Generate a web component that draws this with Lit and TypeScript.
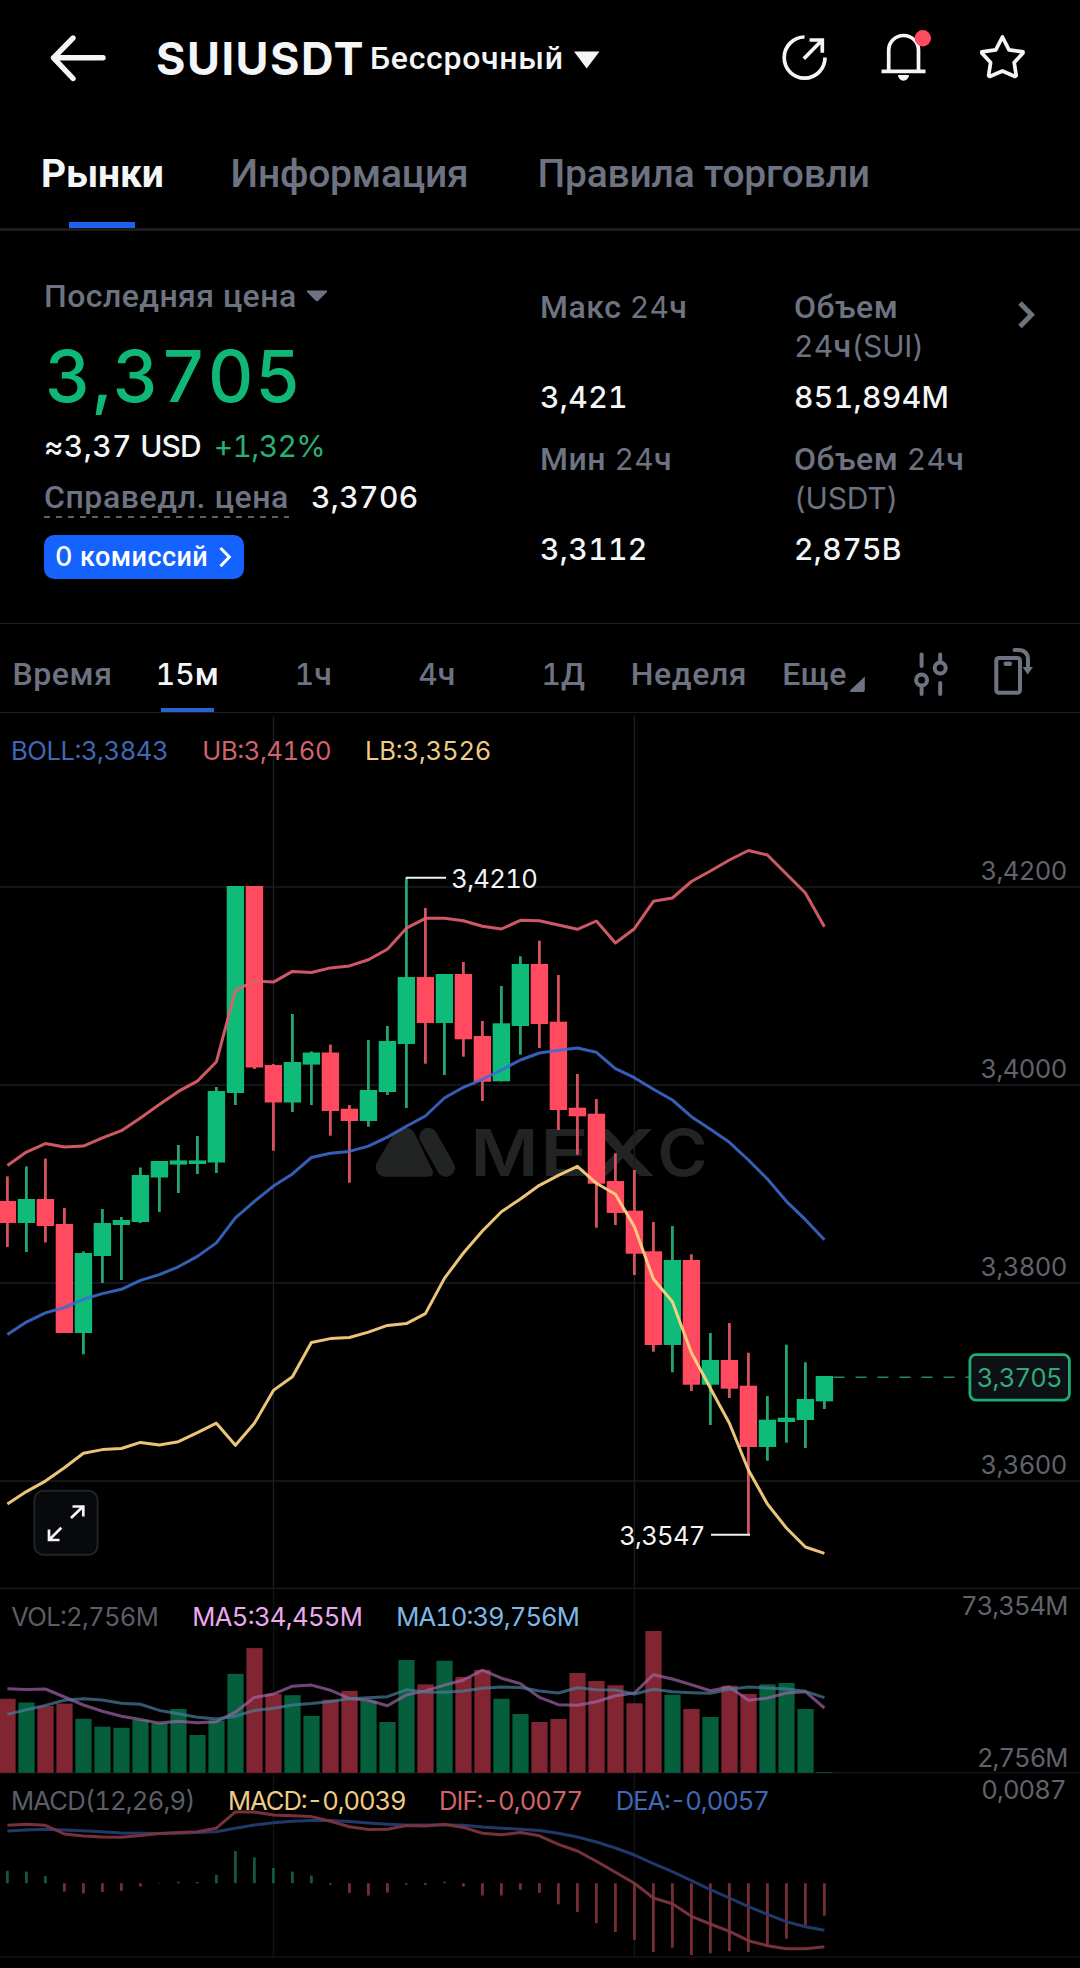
import { LitElement, html, svg, css } from "lit";
import { customElement } from "lit/decorators.js";

type Candle = [up: 0 | 1, high: number, top: number, bottom: number, low: number];

const STEP = 19;
const cx = (i: number) => 7.4 + STEP * i;

const candles: Candle[] = [
  [0, 1176.4, 1201, 1223, 1247], [1, 1166.4, 1199, 1223, 1252], [0, 1158.6, 1199, 1226, 1242.5],
  [0, 1208, 1224, 1333, 1333], [1, 1251.4, 1253, 1333, 1354.3], [1, 1209, 1223, 1256, 1283],
  [1, 1217, 1220, 1225, 1280], [1, 1167.5, 1175, 1222, 1223], [1, 1161, 1161, 1177.5, 1212],
  [1, 1145, 1160.4, 1164.6, 1193], [1, 1136, 1160.4, 1164, 1174], [1, 1087, 1091, 1162.5, 1173],
  [1, 886, 886, 1093, 1105], [0, 886, 886, 1067.5, 1069], [0, 1064, 1065, 1102.5, 1150.7],
  [1, 1014, 1062, 1102.5, 1112], [1, 1051.4, 1052.5, 1064.6, 1105], [0, 1044.6, 1052.5, 1111, 1135.7],
  [0, 1105, 1108.7, 1121, 1182.7], [1, 1040, 1090, 1121, 1126.7], [1, 1026, 1041, 1092, 1095],
  [1, 877.3, 977, 1044, 1108], [0, 908, 977, 1023, 1063.7], [1, 974, 974, 1023, 1075],
  [0, 962, 974, 1039.3, 1056.7], [0, 1021, 1036, 1081.7, 1101], [1, 986, 1023.3, 1081.3, 1081.3],
  [1, 956.3, 964, 1026, 1054.7], [0, 940.7, 964, 1024, 1048], [0, 975, 1021.7, 1110, 1130],
  [0, 1074, 1107.7, 1116.3, 1154.7], [0, 1099, 1113.7, 1183.7, 1227.7], [0, 1153.3, 1181, 1213, 1225],
  [0, 1170, 1210.7, 1253.7, 1275], [0, 1222, 1251.3, 1345, 1351.7], [1, 1226, 1260, 1345, 1372.3],
  [0, 1254.3, 1260, 1384.7, 1391], [1, 1333, 1360, 1384.7, 1425], [0, 1323, 1360, 1388.7, 1398],
  [0, 1352.7, 1385.7, 1447, 1534.7], [1, 1396, 1419.7, 1447, 1460.7], [1, 1344.7, 1417.7, 1422, 1442.7],
  [1, 1362.3, 1399, 1420, 1448], [1, 1376, 1376, 1401.3, 1409],
];

const upperBand = [
  1165.4, 1152.1, 1143.6, 1147.1, 1146.1, 1137.9, 1130.7, 1117.9, 1104.6, 1091.4, 1081.1, 1061.8, 990.4, 981.1, 982.1,
  971.4, 972.5, 967.9, 965.9, 959.8, 949.3, 928.2, 918.3, 918.3, 920.7, 926.3, 929, 920.3, 920.7, 925, 929.3, 921, 943,
  928.7, 901.3, 898, 881.5, 871, 860, 850.5, 855, 874, 893, 926.8,
];
const middleBand = [
  1334.6, 1322.1, 1312.9, 1307.5, 1299.3, 1293.6, 1289.3, 1280.4, 1274.6, 1266.8, 1256.4, 1242.9, 1217.9, 1201.4, 1186.1,
  1173.9, 1157.5, 1153.2, 1151.4, 1146.1, 1137.1, 1126.2, 1116, 1098, 1087.3, 1079.3, 1070, 1060, 1053, 1050.3, 1048,
  1052.3, 1068.7, 1077.7, 1089.3, 1100, 1116.7, 1129.3, 1142.3, 1160, 1179, 1201.3, 1219.7, 1239.7,
];
const lowerBand = [
  1504, 1491.6, 1481.1, 1467.7, 1453.2, 1449.6, 1448.5, 1442.4, 1444.9, 1441.7, 1432.6, 1423.2, 1445.3, 1423.2, 1390.4,
  1376.8, 1342.5, 1338.6, 1337.5, 1332.1, 1325.4, 1323.6, 1313.6, 1278.4, 1253, 1231, 1211.7, 1199, 1185.3, 1175.3,
  1166.3, 1183.3, 1194.3, 1226.7, 1279, 1301.7, 1352.7, 1388.3, 1423.3, 1470, 1504, 1528, 1547, 1553.3,
];

const volumeTops = [
  1698.8, 1702.5, 1706, 1703.6, 1718.8, 1726.7, 1727.8, 1719.9, 1723.1, 1709, 1735, 1720.6, 1673.9, 1648.1, 1694,
  1695.2, 1715.9, 1699.6, 1690.9, 1700.7, 1722, 1660, 1684.4, 1660.8, 1677, 1669.9, 1698.8, 1714, 1722, 1719, 1673,
  1681, 1685.3, 1703.3, 1631, 1694.7, 1709, 1717, 1685.7, 1694, 1684.3, 1683, 1709, 1772,
];
const volumeMa5 = [
  1688.7, 1689.4, 1689, 1697, 1705, 1711.2, 1716.2, 1719.5, 1723.1, 1721.3, 1722.8, 1721.7, 1712.2, 1697.4, 1694.1,
  1686.2, 1685.1, 1690.2, 1698.5, 1700.3, 1705.7, 1694.9, 1690.9, 1685.1, 1680, 1670.2, 1678.2, 1683.6, 1697.3, 1704.7,
  1705.3, 1701.7, 1695.7, 1693, 1674.7, 1679, 1684.7, 1690.7, 1687, 1700.3, 1698, 1693, 1691.7, 1708,
];
const volumeMa10 = [
  1714.4, 1709.7, 1705.4, 1700.3, 1698.8, 1699.9, 1703.2, 1704.3, 1710.4, 1713.7, 1717.3, 1719.1, 1716.2, 1710.4,
  1708.3, 1705, 1703.6, 1701.4, 1698.8, 1697.8, 1696.7, 1689.8, 1692, 1692.3, 1690.9, 1688.3, 1686.9, 1687.6, 1691,
  1693, 1687.7, 1689.7, 1690, 1694, 1689.3, 1691.7, 1692.7, 1693.3, 1689.3, 1687, 1688, 1689, 1691.3, 1697.7,
];

const MACD_ZERO = 1883.3;
const macdEnds = [
  1870.9, 1871.6, 1876, 1891.6, 1893.4, 1891.9, 1890.8, 1886.5, 1882.8, 1881.8, 1882.1, 1874.9, 1851, 1857.5, 1868,
  1871.6, 1875.6, 1884.9, 1893, 1895.5, 1892.6, 1884.7, 1885, 1881.8, 1886.5, 1895.5, 1895.5, 1889.7, 1892.7, 1904.3,
  1912, 1923.3, 1932, 1940, 1952, 1947.7, 1955, 1953.3, 1951.3, 1952, 1945.3, 1938.7, 1925.3, 1915.7,
];
const dif = [
  1825.3, 1824.2, 1825.3, 1834, 1836.1, 1836.9, 1837.2, 1835.4, 1833.6, 1832.5, 1831.8, 1828.2, 1811.9, 1811.9, 1815.1,
  1815.8, 1816.6, 1821.3, 1826.7, 1829.6, 1829.2, 1825.6, 1826, 1824.2, 1827.4, 1833.2, 1834.7, 1832.5, 1835.8, 1844.3,
  1851, 1861.3, 1872.3, 1883.3, 1898, 1903.7, 1916.3, 1924, 1931.3, 1940.7, 1945.7, 1948.7, 1948.7, 1946.7,
];
const dea = [
  1831.1, 1830, 1829.3, 1830, 1830.7, 1831.8, 1832.9, 1833.2, 1833.6, 1833.2, 1832.5, 1831.8, 1828.2, 1824.9, 1822.7,
  1821.3, 1820.6, 1820.6, 1821.6, 1823.1, 1824.2, 1824.9, 1824.9, 1824.9, 1825.3, 1827.1, 1828.2, 1829.2, 1830.5,
  1833.3, 1837, 1842, 1848, 1855, 1863.7, 1871.7, 1880.7, 1889.7, 1898, 1906.7, 1914.3, 1921.7, 1926.7, 1930.3,
];

const points = (ys: number[]) => ys.map((y, i) => `${cx(i)},${y}`).join(" ");

/** Digits and Latin letters use Inter, Cyrillic stays in Roboto. */
const mixed = (text: string) =>
  text
    .split(/([0-9]+|[A-Z()]+)/)
    .filter((part) => part)
    .map((part) =>
      /[0-9]/.test(part)
        ? html`<span class="n">${part}</span>`
        : /[A-Z()]/.test(part)
          ? html`<span class="n latin">${part}</span>`
          : part,
    );

/** [text, x, baseline, width, class] */
type Label = [string, number, number, number, string];

const labels: Label[] = [
  ["BOLL:3,3843", 11, 759.7, 157.6, "t-blue"],
  ["UB:3,4160", 202.3, 759.7, 129.2, "t-red"],
  ["LB:3,3526", 365, 759.7, 126.4, "t-yellow"],
  ["VOL:2,756M", 11.3, 1626, 147.5, "t-gray"],
  ["MA5:34,455M", 192.3, 1626, 170.6, "t-pink"],
  ["MA10:39,756M", 396.2, 1626, 183.7, "t-sky"],
  ["MACD(12,26,9)", 11, 1809.7, 184.4, "t-gray"],
  ["MACD:-0,0039", 228, 1809.7, 178.7, "t-yellow"],
  ["DIF:-0,0077", 439, 1809.7, 144.2, "t-red"],
  ["DEA:-0,0057", 615.8, 1809.7, 154, "t-blue"],
  ["3,4200", 980.4, 880, 87, "t-axis"],
  ["3,4000", 980.4, 1078, 87, "t-axis"],
  ["3,3800", 980.4, 1276, 87, "t-axis"],
  ["3,3600", 980.4, 1474, 87, "t-axis"],
  ["73,354M", 961, 1614.7, 107.4, "t-axis"],
  ["2,756M", 977, 1766.7, 91.4, "t-axis"],
  ["0,0087", 981.2, 1798.7, 85.4, "t-axis"],
  ["3,4210", 451.2, 887.7, 86.6, "t-white"],
  ["3,3547", 619.2, 1544.7, 86.2, "t-white"],
];

/** Watermark letters: [letter, x, width] */
const wordmark: [string, number, number][] = [
  ["M", 470.5, 68],
  ["E", 540, 49],
  ["X", 590, 66],
  ["C", 657.5, 50],
];

@customElement("kline-chart")
export class KlineChart extends LitElement {
  static styles = css`
    :host { display: block; }
    svg { display: block; width: 1080px; height: 1254px; }
    text { font-family: Inter, "Liberation Sans", sans-serif; font-size: 25.6px; font-weight: 400; font-variant-numeric: tabular-nums; }
    .grid { stroke: #1b1d22; stroke-width: 1.4; }
    .grid.faint { stroke: #121316; }
    .body-up { fill: #0ebb78; }
    .body-down { fill: #ff4a60; }
    .wick-up { fill: #24a56f; }
    .wick-down { fill: #d8515f; }
    .vol-up { fill: #065f3c; }
    .vol-down { fill: #822532; }
    .macd-up { fill: #14573c; }
    .macd-down { fill: #762d34; }
    .line { fill: none; stroke-width: 3; stroke-linejoin: round; }
    .ub { stroke: #e0606c; stroke-opacity: 0.92; }
    .mb { stroke: #3c6cd0; stroke-opacity: 0.88; }
    .lb { stroke: #ffd583; stroke-opacity: 0.92; }
    .ma5 { stroke: #a065a5; stroke-opacity: 0.7; }
    .ma10 { stroke: #487d9b; stroke-opacity: 0.7; }
    .dif { stroke: #7c353d; stroke-opacity: 0.95; }
    .dea { stroke: #233b70; stroke-opacity: 0.95; }
    .t-blue { fill: #4168b8; }
    .t-red { fill: #d0636c; }
    .t-yellow { fill: #eecb86; }
    .t-gray { fill: #5b5e66; }
    .t-axis { fill: #60636b; }
    .t-pink { fill: #eda9ee; }
    .t-sky { fill: #7cb9e8; }
    .t-white { fill: #f5f5f7; }
    .t-price { fill: #31ab77; }
    .mark { fill: #222423; }
    .mark-text { font-size: 64.5px; font-weight: 600; fill: #222423; }
    .callout { stroke: #f0f0f2; stroke-width: 2; }
    .dash { stroke: #27885d; stroke-width: 1.4; stroke-dasharray: 11 11; }
    .tag { fill: #0d1015; stroke: #1fab74; stroke-width: 2.8; }
    .expand { fill: #08090b; stroke: #20232a; stroke-width: 2; }
    .arrow { fill: none; stroke: #f5f5f7; stroke-width: 2.7; }
  `;

  private label([text, x, y, width, cls]: Label) {
    return svg`<text class=${cls} x=${x} y=${y} textLength=${width}>${text}</text>`;
  }

  render() {
    return html`
      <svg viewBox="0 714 1080 1254">
        <path class="mark" d="M393.5 1134.5 Q398 1127.5 405 1127.5 Q411.5 1127.5 415 1134 L432.3 1170 Q435 1176.8 428 1176.8 L386 1176.8 Q379 1176.8 376.5 1171 Q374.800 1166 377.500 1161 Z" />
        <path d="M428.300 1136.800 L446 1167.800" stroke="#222423" stroke-width="18" stroke-linecap="round" />
        ${wordmark.map(
          ([letter, x, width]) =>
            svg`<text class="mark-text" x=${x} y="1176" textLength=${width} lengthAdjust="spacingAndGlyphs">${letter}</text>`,
        )}

        ${[887, 1085, 1283, 1481, 1588.4].map((y) => svg`<line class="grid" x1="0" x2="1080" y1=${y} y2=${y} />`)}
        ${[1772.7, 1957].map((y) => svg`<line class="grid faint" x1="0" x2="1080" y1=${y} y2=${y} />`)}
        ${[273.5, 634.4].map(
          (x) => svg`
            <line class="grid" x1=${x} x2=${x} y1="716" y2="1588" />
            <line class="grid faint" x1=${x} x2=${x} y1="1588" y2="1957" />`,
        )}

        ${candles.map(([up, high, top, bottom, low], i) => {
          const side = up ? "up" : "down";
          return svg`
            <rect class="wick-${side}" x=${cx(i) - 1.4} y=${high} width="2.8" height=${low - high} />
            <rect class="body-${side}" x=${cx(i) - 8.7} y=${top} width="17.4" height=${bottom - top} />`;
        })}
        <polyline class="line ub" points=${points(upperBand)} />
        <polyline class="line mb" points=${points(middleBand)} />
        <polyline class="line lb" points=${points(lowerBand)} />
        <line class="callout" x1="406" x2="446" y1="877.700" y2="877.700" />
        <line class="callout" x1="711" x2="750" y1="1534.700" y2="1534.700" />

        <line class="dash" x1="833.500" x2="969" y1="1377.300" y2="1377.300" />
        <rect class="tag" x="969.900" y="1354.700" width="99.500" height="45.400" rx="6" />
        <text class="t-price" x="976.800" y="1386.700" textLength="85.800">3,3705</text>

        ${volumeTops.map(
          (y, i) => svg`<rect class="vol-${candles[i][0] ? "up" : "down"}" x=${cx(i) - 8} y=${y} width="16.2" height=${1772.8 - y} />`,
        )}
        <polyline class="line ma5" points=${points(volumeMa5)} />
        <polyline class="line ma10" points=${points(volumeMa10)} />

        ${macdEnds.map(
          (y, i) => svg`<rect class="macd-${y < MACD_ZERO ? "up" : "down"}" x=${cx(i) - 1.4} y=${Math.min(y, MACD_ZERO)} width="2.8" height=${Math.abs(y - MACD_ZERO)} />`,
        )}
        <polyline class="line dea" points=${points(dea)} />
        <polyline class="line dif" points=${points(dif)} />

        ${labels.map((l) => this.label(l))}

        <rect class="expand" x="34.400" y="1490.800" width="63.200" height="64" rx="9" />
        <path class="arrow" d="M71 1518 L83 1506.500 M72.500 1506.500 H83.300 V1516.500 M61.300 1527.800 L49.500 1539.500 M49 1529.500 V1540 H59.500" />
      </svg>
    `;
  }
}

@customElement("app-root")
export class AppRoot extends LitElement {
  static styles = css`
    :host {
      display: block;
      width: 1080px;
      height: 1968px;
      overflow: hidden;
      background: #000;
      color: #f4f5f7;
      font-family: Roboto, "Liberation Sans", sans-serif;
      font-weight: 500;
      white-space: nowrap;
      font-variant-numeric: tabular-nums;
    }
    .n { font-family: Inter, "Liberation Sans", sans-serif; line-height: 1; }
    svg { display: block; flex: none; overflow: visible; }
    .stroke { fill: none; stroke: #f4f5f7; stroke-width: 3.7; }

    .header { display: flex; align-items: center; box-sizing: border-box; height: 116px; padding: 0 51px 0 46px; }
    .symbol { margin: 2px 0 0 44px; font: 700 45px/54px Inter, sans-serif; letter-spacing: 1.5px; }
    .kind { margin: -1px 9px 0 5px; font-size: 32px; line-height: 40px; letter-spacing: 0.7px; }
    .actions { display: flex; margin-left: auto; gap: 45px; }

    .tabs { display: flex; box-sizing: border-box; height: 115px; padding: 34px 0 0 41px; border-bottom: 3px solid #1a1c22; }
    .tab { display: flex; flex-direction: column; align-items: center; font-size: 39px; line-height: 48px; letter-spacing: -0.2px; color: #6d7380; }
    .tab.active { color: #f4f5f7; font-weight: 700; letter-spacing: -0.2px; }
    .tab.active::after { content: ""; width: 66px; height: 6px; margin-top: 24px; background: #1d62ee; }
    .tab + .tab { margin-left: 67px; }
    .tab + .tab + .tab { margin-left: 69px; }

    .quote { display: flex; box-sizing: border-box; height: 392px; padding: 45px 44px 0; color: #6d7380; }
    .left { display: flex; flex-direction: column; align-items: flex-start; width: 496px; font-size: 32px; line-height: 40px; letter-spacing: 0.45px; }
    .row { display: flex; align-items: center; height: 40px; }
    .price { margin: 20px 0 10px 1px; font: 450 71px/80px Inter, sans-serif; font-variant-numeric: tabular-nums; letter-spacing: 1.4px; color: #10b877; }
    .val { font: 450 30px/40px Inter, sans-serif; font-variant-numeric: tabular-nums; letter-spacing: 0.4px; color: #f4f5f7; }
    .val .latin { letter-spacing: -0.9px; }
    .latin { letter-spacing: -0.2px; }
    .gain { font: 400 30px/40px Inter, sans-serif; font-variant-numeric: tabular-nums; letter-spacing: -0.7px; margin-left: 13px; color: #2aaf76; }
    .fair { margin-top: 11px; }
    .dotted {
      height: 41px;
      letter-spacing: 0.6px;
      background: repeating-linear-gradient(90deg, #5d626d 0 6px, transparent 6px 12px) bottom / 100% 2px no-repeat;
      margin-right: 22px;
    }
    .badge {
      display: flex; align-items: center; box-sizing: border-box; width: 200px; height: 44px; margin-top: 18px; padding: 0 12px 0 11px;
      justify-content: space-between; border-radius: 10px; background: #1463ff; color: #fff; font-size: 27px; line-height: 44px;
    }
    .badge .n { font-weight: 450; }
    .stats { display: grid; grid-template-columns: 254px 218px; grid-template-rows: 129px 129px; row-gap: 23px; padding-top: 12px; }
    .stat { display: flex; flex-direction: column; gap: 11px; }
    .stat-label { height: 78px; font-size: 32px; line-height: 39px; white-space: pre; letter-spacing: 0.5px; }
    .stat-label .n { font-size: 30px; font-weight: 400; }
    .stat-label .n:not(.latin) { letter-spacing: 0.3px; }
    .more { margin-top: 24px; }

    .frames { display: flex; box-sizing: border-box; height: 91px; padding: 0 44px 0 12px; border-top: 1px solid #1b1d22; color: #6d7380; }
    .frame { display: flex; flex-direction: column; align-items: center; padding-top: 30px; font-size: 32px; line-height: 40px; letter-spacing: 0.6px; }
    .frame.end { box-sizing: border-box; align-items: flex-end; padding-right: 1px; }
    .frame .n { font-size: 30px; font-weight: 450; letter-spacing: 0; }
    .frame.active { color: #f4f5f7; }
    .frame.active::after { content: ""; width: 53px; height: 4px; margin-top: 14px; background: #2a63d2; }
    .frames-line { height: 1px; margin-top: -2px; margin-bottom: 1px; background: #1b1d22; }
  `;

  private stat(label: string, value: string) {
    return html`<div class="stat"><div class="stat-label">${mixed(label)}</div><div class="val">${value}</div></div>`;
  }

  render() {
    return html`
      <div class="header">
        <svg width="66" height="54" viewBox="46 31 66 54">
          <path class="stroke" style="stroke-width:5.4;stroke-linecap:round;stroke-linejoin:round" d="M73 38 L53.500 57.800 L73 78.500 M53.500 57.800 H103" />
        </svg>
        <div class="symbol">SUIUSDT</div>
        <div class="kind">Бессрочный</div>
        <svg width="27" height="20" viewBox="573 48 27 20"><path d="M574 51.500 H599.500 L586.700 68.500 Z" fill="#f4f5f7" /></svg>
        <div class="actions">
          <svg width="54" height="54" viewBox="777 31 54 54">
            <path class="stroke" d="M804.500 37 A20.400 20.600 0 1 0 825 57.600 M803.800 58.800 L821.500 40.700 M809.600 40 H822.300 V52.800" />
          </svg>
          <svg width="54" height="54" viewBox="876 31 54 54">
            <path class="stroke" d="M888.700 71 V50 A14.900 14.500 0 0 1 918.500 50 V71 M881.500 71.400 H925.500" />
            <path d="M898 75 H909 A5.500 5.800 0 0 1 898 75 Z" fill="#f4f5f7" />
            <circle cx="922.800" cy="38.300" r="8.200" fill="#ff4a60" />
          </svg>
          <svg width="54" height="54" viewBox="975 31 54 54">
            <path class="stroke" stroke-linejoin="round" d="M1002.400 37 L1009 49.800 L1023 51.800 L1023 53 L1014.200 62.600 L1016.200 75.500 L1015 76.500 L1002.400 71 L989.800 76.500 L988.600 75.500 L990.600 62.600 L981.800 53 L981.800 51.800 L995.800 49.800 Z" />
          </svg>
        </div>
      </div>

      <div class="tabs">
        <div class="tab active">Рынки</div>
        <div class="tab">Информация</div>
        <div class="tab">Правила торговли</div>
      </div>

      <div class="quote">
        <div class="left">
          <div class="row">
            Последняя цена
            <svg width="22" height="14" viewBox="306 288 22 14" style="margin-left:9px"><path d="M307 289.500 H327 V291 L318.500 299.500 Q317 300.800 315.500 299.500 L307 291 Z" fill="#6d7380" /></svg>
          </div>
          <div class="price">3,3705</div>
          <div class="row"><span class="val">≈3,37 <span class="latin">USD</span></span><span class="gain">+1,32%</span></div>
          <div class="row fair"><span class="dotted">Справедл. цена</span><span class="val">3,3706</span></div>
          <div class="badge">
            <span>${mixed("0 комиссий")}</span>
            <svg width="13" height="22" viewBox="219 546 13 22"><path d="M220.500 548 L229.300 557 L220.500 566.200" fill="none" stroke="#fff" stroke-width="3" /></svg>
          </div>
        </div>
        <div class="stats">
          ${this.stat("Макс 24ч", "3,421")} ${this.stat("Объем\n24ч(SUI)", "851,894M")}
          ${this.stat("Мин 24ч", "3,3112")} ${this.stat("Объем 24ч\n(USDT)", "2,875B")}
        </div>
        <svg class="more" width="24" height="30" viewBox="1012 300 24 30"><path d="M1020 303 L1031.500 314.700 L1020 326.500" fill="none" stroke="#6d7380" stroke-width="5" /></svg>
      </div>

      <div class="frames">
        <div class="frame" style="width:101px"><span>Время</span></div>
        <div class="frame active" style="width:149px"><span>${mixed("15м")}</span></div>
        <div class="frame" style="width:103px"><span>${mixed("1ч")}</span></div>
        <div class="frame" style="width:144px"><span>${mixed("4ч")}</span></div>
        <div class="frame" style="width:109px"><span>${mixed("1Д")}</span></div>
        <div class="frame" style="width:142px"><span>Неделя</span></div>
        <div class="frame end" style="width:88px"><span>Еще</span></div>
        <svg width="17" height="91" viewBox="848 623 17 91"><path d="M864.800 675.500 V689 Q864.800 691 863 691 H850.500 Q849.500 690 850.500 689 Z" fill="#6d7380" /></svg>
        <svg width="40" height="91" viewBox="911 624 40 91" style="margin-left:46px">
          <path d="M921.600 654.500 V666 M921.600 687 V694 M940.200 654.500 V662 M940.200 683 V694" fill="none" stroke="#6d7380" stroke-width="4" stroke-linecap="round" />
          <circle cx="921.600" cy="680" r="5.500" fill="none" stroke="#6d7380" stroke-width="4" />
          <circle cx="940.200" cy="668" r="5.500" fill="none" stroke="#6d7380" stroke-width="4" />
        </svg>
        <svg width="44" height="91" viewBox="990 624 44 91" style="margin-left:39px">
          <rect x="996.300" y="658" width="23.700" height="34.700" rx="2.500" fill="none" stroke="#6d7380" stroke-width="4" />
          <rect x="1003.500" y="661.500" width="8.500" height="4.500" rx="2" fill="#6d7380" />
          <path d="M1014.500 650 H1018 Q1028 650 1028 660 V668" fill="none" stroke="#6d7380" stroke-width="4" stroke-linecap="round" />
          <path d="M1022.500 667 H1033 L1027.700 674.500 Z" fill="#6d7380" />
        </svg>
      </div>
      <div class="frames-line"></div>
      <kline-chart></kline-chart>
    `;
  }
}
